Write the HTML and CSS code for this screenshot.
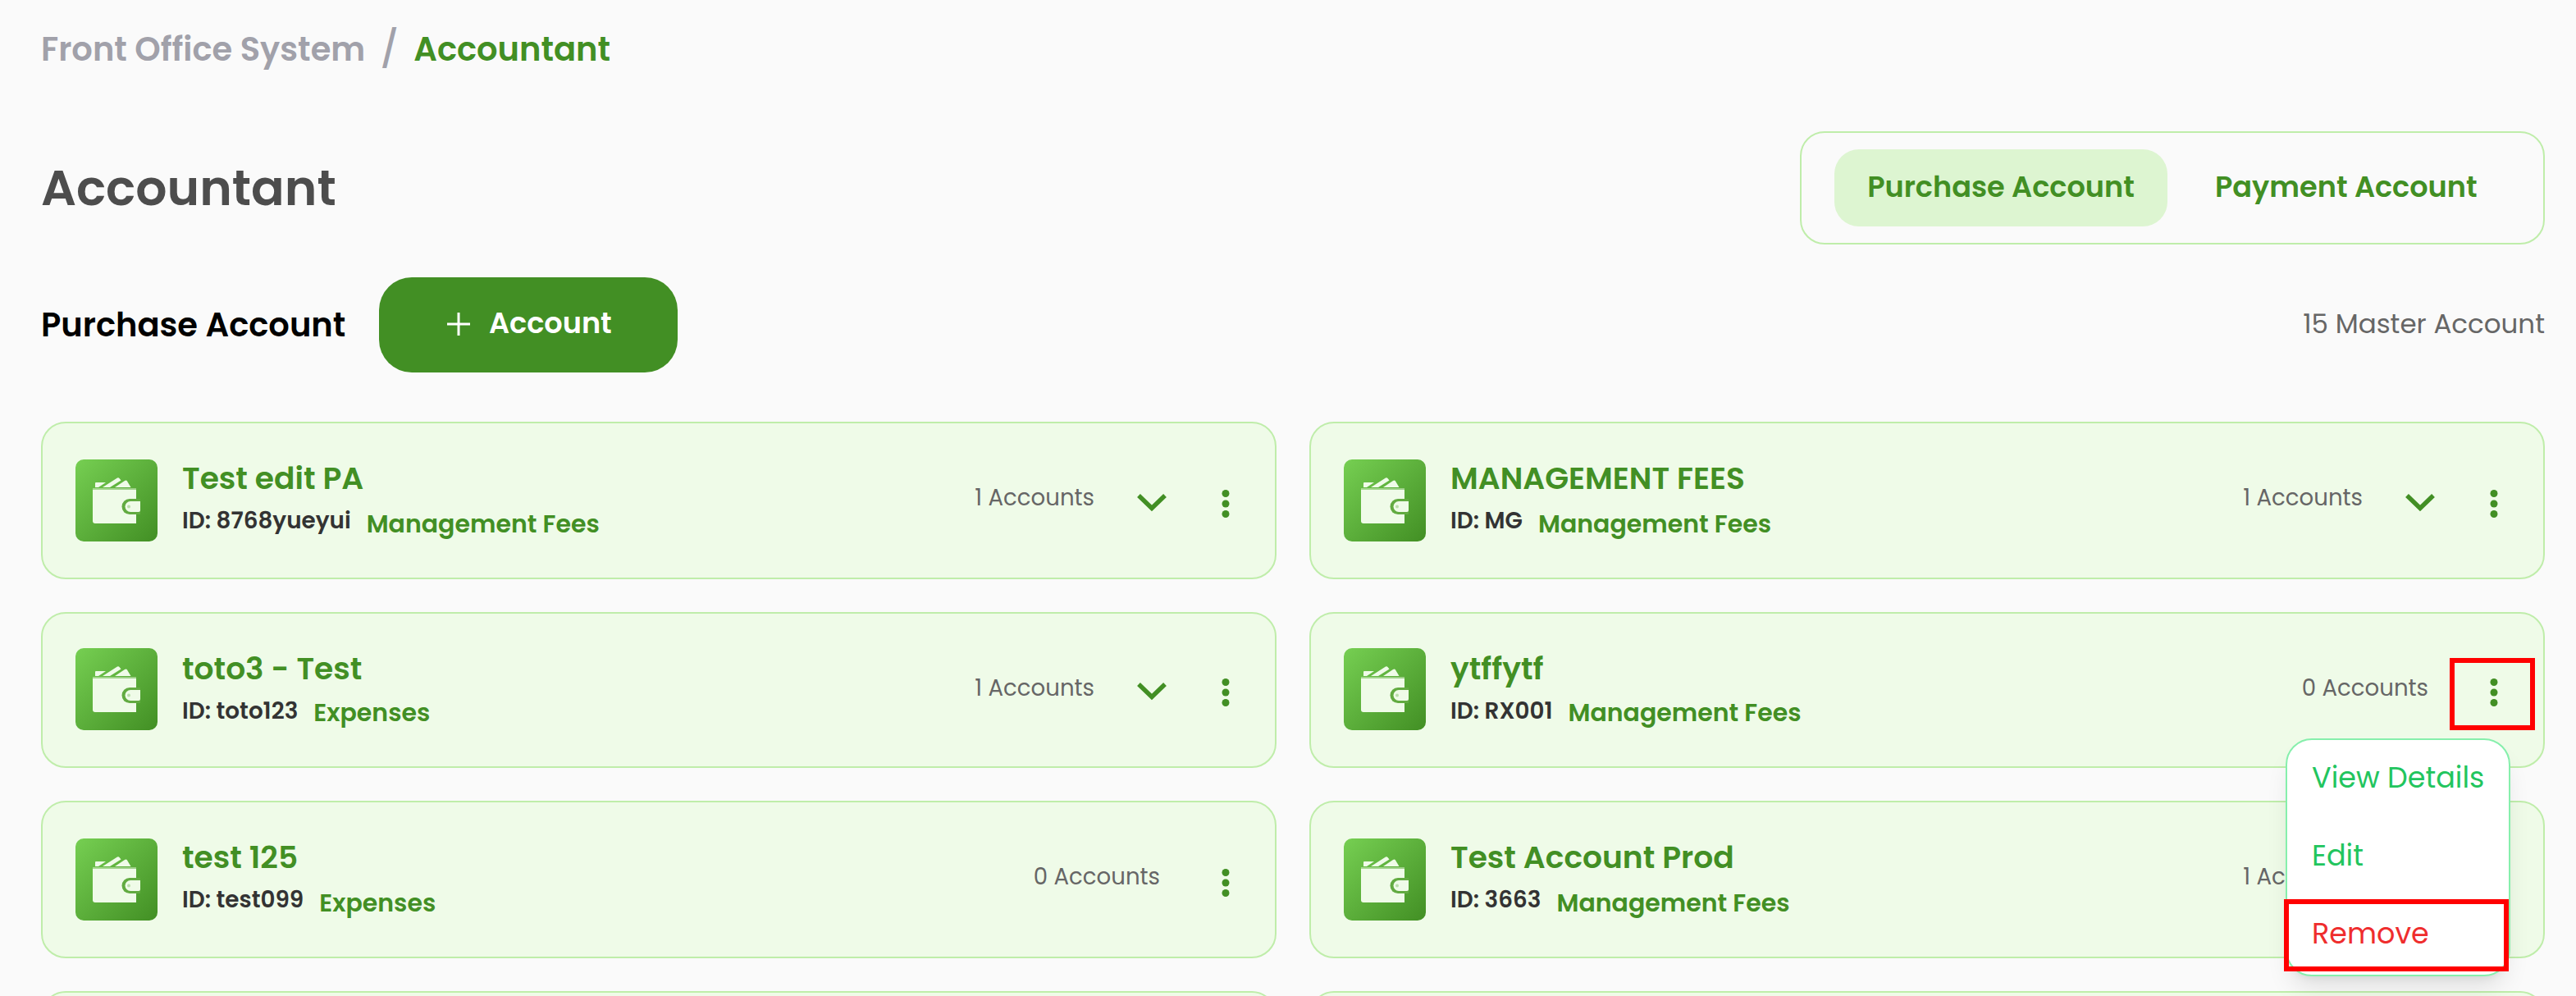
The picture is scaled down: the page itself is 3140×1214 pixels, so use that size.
FILE: index.html
```
<!DOCTYPE html>
<html lang="en">
<head>
<meta charset="UTF-8">
<meta name="viewport" content="width=device-width, initial-scale=1.0">
<title>Front Office System - Accountant</title>
<link rel="stylesheet" href="styles.css">
</head>
<body>

<!-- Shared icons -->
<svg class="sprite" width="0" height="0">
    <defs>
        <linearGradient id="walletBg" x1="0" y1="0" x2="1" y2="1">
            <stop offset="0" stop-color="#76cf52"/>
            <stop offset="1" stop-color="#428f24"/>
        </linearGradient>
    </defs>
    <symbol id="wallet" viewBox="0 0 100 100">
        <rect width="100" height="100" rx="10" fill="url(#walletBg)"/>
        <g fill="#effbe8">
            <path d="M24 34V29q0-1 1-1H37L28 34z"/>
            <path d="M33 34L51 22.500q1.500-.8 2.500.5l2 2.500L42 34z"/>
            <path d="M48 34L60 26q2-1 3 .5L67.500 34z"/>
            <rect x="21" y="35" width="53" height="3" opacity=".45"/>
            <path d="M21 37H74V78H24q-3 0-3-3z"/>
        </g>
        <path d="M79 48H66a9.500 9.500 0 0 0 0 19H79z" fill="#62ab41"/>
        <path d="M79 51H67a6.500 6.500 0 0 0 0 13H77q2 0 2-2z" fill="#effbe8"/>
        <circle cx="65" cy="57.500" r="2" fill="#b9deaa"/>
    </symbol>
    <symbol id="chevron" viewBox="0 0 40 40">
        <path d="M4 12L20 27.500L36 12" fill="none" stroke="#428f24" stroke-width="5.500"/>
    </symbol>
    <symbol id="dots" viewBox="0 0 40 40">
        <g fill="#428f24">
            <circle cx="20" cy="7.500" r="4.500"/>
            <circle cx="20" cy="20" r="4.500"/>
            <circle cx="20" cy="32.500" r="4.500"/>
        </g>
    </symbol>
</svg>

<div class="page">
    <nav class="breadcrumb">
        <a>Front Office System</a>
        <span class="slash">/</span>
        <span class="current">Accountant</span>
    </nav>

    <header class="header">
        <h1>Accountant</h1>
        <div class="tabs">
            <button class="tab active">Purchase Account</button>
            <button class="tab payment">Payment Account</button>
        </div>
    </header>

    <div class="toolbar">
        <h2>Purchase Account</h2>
        <button class="add-btn">
            <svg class="plus" viewBox="0 0 30 30"><path d="M15 1V29M1 15H29" stroke="#fff" stroke-width="3"/></svg>
            <span>Account</span>
        </button>
        <span class="total">15 Master Account</span>
    </div>

    <div class="cards">
        <div class="card">
            <svg class="icon"><use href="#wallet"/></svg>
            <div class="info">
                <h3>Test edit PA</h3>
                <div class="meta"><span class="id">ID: 8768yueyui</span><span class="category">Management Fees</span></div>
            </div>
            <span class="count one">1 Accounts</span>
            <svg class="chevron"><use href="#chevron"/></svg>
            <svg class="dots"><use href="#dots"/></svg>
        </div>

        <div class="card">
            <svg class="icon"><use href="#wallet"/></svg>
            <div class="info">
                <h3>MANAGEMENT FEES</h3>
                <div class="meta"><span class="id">ID: MG</span><span class="category">Management Fees</span></div>
            </div>
            <span class="count one">1 Accounts</span>
            <svg class="chevron"><use href="#chevron"/></svg>
            <svg class="dots"><use href="#dots"/></svg>
        </div>

        <div class="card row-two">
            <svg class="icon"><use href="#wallet"/></svg>
            <div class="info">
                <h3>toto3 - Test</h3>
                <div class="meta"><span class="id">ID: toto123</span><span class="category">Expenses</span></div>
            </div>
            <span class="count one">1 Accounts</span>
            <svg class="chevron"><use href="#chevron"/></svg>
            <svg class="dots"><use href="#dots"/></svg>
        </div>

        <div class="card row-two">
            <svg class="icon"><use href="#wallet"/></svg>
            <div class="info">
                <h3>ytffytf</h3>
                <div class="meta"><span class="id">ID: RX001</span><span class="category">Management Fees</span></div>
            </div>
            <span class="count">0 Accounts</span>
            <svg class="dots"><use href="#dots"/></svg>
            <div class="mark mark-dots"></div>
            <!-- Open action menu -->
            <div class="menu">
                <a class="menu-item">View Details</a>
                <a class="menu-item">Edit</a>
                <a class="menu-item remove">Remove</a>
                <div class="mark mark-remove"></div>
            </div>
        </div>

        <div class="card">
            <svg class="icon"><use href="#wallet"/></svg>
            <div class="info">
                <h3>test 125</h3>
                <div class="meta"><span class="id">ID: test099</span><span class="category">Expenses</span></div>
            </div>
            <span class="count">0 Accounts</span>
            <svg class="dots"><use href="#dots"/></svg>
        </div>

        <div class="card">
            <svg class="icon"><use href="#wallet"/></svg>
            <div class="info">
                <h3>Test Account Prod</h3>
                <div class="meta"><span class="id">ID: 3663</span><span class="category">Management Fees</span></div>
            </div>
            <span class="count one">1 Accounts</span>
            <svg class="chevron"><use href="#chevron"/></svg>
            <svg class="dots"><use href="#dots"/></svg>
        </div>

        <div class="card"></div>
        <div class="card"></div>
    </div>
</div>

</body>
</html>
```
FILE: styles.css
```
* {
    box-sizing: border-box;
}

body {
    margin: 0;
    background-color: #fafafa;
    font-family: Poppins, Inter, sans-serif;
}

h1, h2, h3 {
    margin: 0;
}

button {
    border: none;
    background: none;
    font-family: inherit;
    cursor: pointer;
}

.sprite {
    display: block;
}

.page {
    height: 1214px;
    padding: 30px 38px 0 50px;
    overflow: hidden;
}

/* Breadcrumb */
.breadcrumb {
    display: flex;
    align-items: center;
    height: 60px;
    font-size: 40px;
    font-weight: 600;
    color: #a1a1aa;
}

.slash {
    width: 59px;
    font-size: 45px;
    font-weight: 500;
    line-height: 60px;
    text-align: center;
}

.breadcrumb .current {
    color: #428f24;
}

/* Title and tabs */
.header {
    display: flex;
    align-items: center;
    justify-content: space-between;
    height: 138px;
    margin-top: 70px;
}

h1 {
    font-size: 60px;
    font-weight: 600;
    color: #4d4d4d;
}

.tabs {
    display: flex;
    align-items: center;
    width: 908px;
    height: 138px;
    padding: 0 40px;
    border: 2px solid #bfedaa;
    border-radius: 30px;
}

.tab {
    height: 94px;
    padding: 0 0 4px;
    border-radius: 30px;
    font-size: 35.1px;
    font-weight: 600;
    color: #428f24;
    white-space: nowrap;
}

.tab.active {
    width: 406px;
    background-color: #ddf5d1;
}

.tab.payment {
    margin-left: 58px;
}

/* Toolbar */
.toolbar {
    display: flex;
    align-items: center;
    height: 116px;
    margin: 40px 0 60px;
}

h2 {
    width: 412px;
    font-size: 40px;
    font-weight: 600;
    color: #000;
    white-space: nowrap;
}

.add-btn {
    display: flex;
    align-items: center;
    gap: 22px;
    width: 364px;
    height: 116px;
    padding: 0 0 2px 82px;
    border-radius: 40px;
    background-color: #428f24;
    color: #fff;
    font-size: 35.1px;
    font-weight: 600;
}

.add-btn span {
    padding-bottom: 3px;
}

.plus {
    width: 30px;
    height: 30px;
}

.total {
    margin-left: auto;
    padding-bottom: 2px;
    font-size: 32.5px;
    color: #666;
}

/* Account cards */
.cards {
    display: grid;
    grid-template-columns: 1fr 1fr;
    grid-template-rows: 192px 190px 192px 192px;
    gap: 40px;
}

.card {
    position: relative;
    display: flex;
    align-items: flex-start;
    padding: 44px 40px 0;
    border: 2px solid #bfedaa;
    border-radius: 30px;
    background-color: #effbe8;
}

.icon {
    flex: none;
    width: 100px;
    height: 100px;
    margin-right: 30px;
}

.row-two .icon {
    margin-top: -2px;
}

.info {
    flex: 1;
    margin-top: -1px;
}

h3 {
    font-size: 37.6px;
    line-height: 48px;
    font-weight: 600;
    color: #428f24;
}

.meta {
    display: flex;
    align-items: flex-start;
    gap: 19px;
    margin-top: 8px;
    line-height: 40px;
}

.id {
    font-size: 27.8px;
    font-weight: 600;
    color: #333;
}

.category {
    margin-top: 4px;
    font-size: 30px;
    font-weight: 600;
    color: #428f24;
}

.row-two .category {
    margin-top: 2px;
}

.count {
    margin-top: 27px;
    margin-right: 60px;
    font-size: 27.6px;
    line-height: 40px;
    color: #666;
}

.count.one {
    margin-right: 50px;
}

.chevron,
.dots {
    width: 40px;
    height: 40px;
    margin-top: 34px;
}

.chevron {
    margin-top: 32px;
    margin-right: 50px;
}

.row-two .dots {
    margin-top: 32px;
}

.row-two .chevron {
    margin-top: 30px;
}

/* Action menu */
.menu {
    position: absolute;
    z-index: 10;
    top: 152px;
    right: 40px;
    display: flex;
    flex-direction: column;
    width: 274px;
    height: 290px;
    border: 2px solid #86efac;
    border-radius: 32px;
    background-color: #fff;
    box-shadow: 0 20px 30px -6px rgba(0, 0, 0, 0.1), 0 8px 12px -8px rgba(0, 0, 0, 0.1);
}

.menu-item {
    display: flex;
    flex: 1;
    align-items: center;
    padding: 0 0 5px 30px;
    font-size: 35px;
    color: #22c55e;
    white-space: nowrap;
}

.menu-item.remove {
    color: #ef2d2d;
}

/* Red highlight frames */
.mark {
    position: absolute;
    border: 6px solid #f00;
}

.mark-dots {
    top: 54px;
    right: 10px;
    width: 104px;
    height: 88px;
}

.mark-remove {
    left: -4px;
    bottom: 4px;
    width: 274px;
    height: 88px;
}
```
